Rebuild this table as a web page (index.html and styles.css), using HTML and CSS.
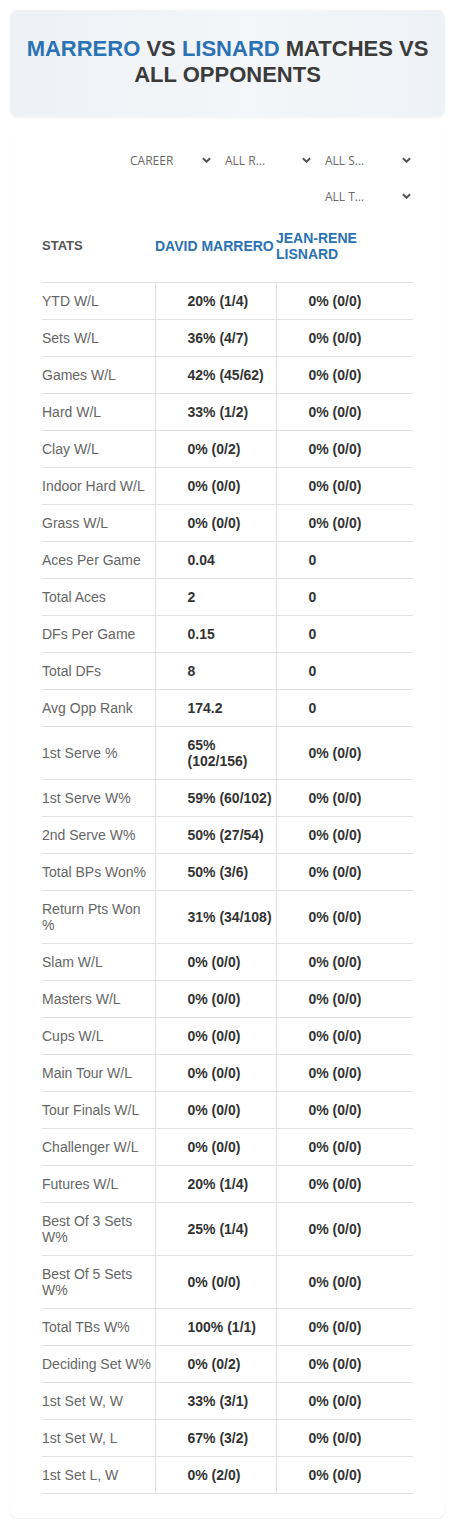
FILE: index.html
```html
<!DOCTYPE html>
<html lang="en">
<head>
    <meta charset="UTF-8">
    <meta name="viewport" content="width=device-width, initial-scale=1.0">
    <title>Marrero vs Lisnard</title>
    <link rel="stylesheet" href="styles.css">
</head>
<body>
    <div class="page-header">
        <h1><span class="blue">MARRERO</span> VS <span class="blue">LISNARD</span> MATCHES VS<br>ALL OPPONENTS</h1>
    </div>

    <div class="stats-card">
        <div class="filters">
            <div class="filter first">CAREER <svg viewBox="0 0 10 6"><polyline points="1,1 5,5 9,1"/></svg></div>
            <div class="filter">ALL R… <svg viewBox="0 0 10 6"><polyline points="1,1 5,5 9,1"/></svg></div>
            <div class="filter">ALL S… <svg viewBox="0 0 10 6"><polyline points="1,1 5,5 9,1"/></svg></div>
            <div class="filter">ALL T… <svg viewBox="0 0 10 6"><polyline points="1,1 5,5 9,1"/></svg></div>
        </div>

        <table class="stats-table">
            <thead>
                <tr>
                    <th class="label">STATS</th>
                    <th class="player">DAVID MARRERO</th>
                    <th class="player">JEAN-RENE LISNARD</th>
                </tr>
            </thead>
            <tbody>
                <tr><td>YTD W/L</td><td>20% (1/4)</td><td>0% (0/0)</td></tr>
                <tr><td>Sets W/L</td><td>36% (4/7)</td><td>0% (0/0)</td></tr>
                <tr><td>Games W/L</td><td>42% (45/62)</td><td>0% (0/0)</td></tr>
                <tr><td>Hard W/L</td><td>33% (1/2)</td><td>0% (0/0)</td></tr>
                <tr><td>Clay W/L</td><td>0% (0/2)</td><td>0% (0/0)</td></tr>
                <tr><td>Indoor Hard W/L</td><td>0% (0/0)</td><td>0% (0/0)</td></tr>
                <tr><td>Grass W/L</td><td>0% (0/0)</td><td>0% (0/0)</td></tr>
                <tr><td>Aces Per Game</td><td>0.04</td><td>0</td></tr>
                <tr><td>Total Aces</td><td>2</td><td>0</td></tr>
                <tr><td>DFs Per Game</td><td>0.15</td><td>0</td></tr>
                <tr><td>Total DFs</td><td>8</td><td>0</td></tr>
                <tr><td>Avg Opp Rank</td><td>174.2</td><td>0</td></tr>
                <tr><td>1st Serve %</td><td>65% (102/156)</td><td>0% (0/0)</td></tr>
                <tr><td>1st Serve W%</td><td>59% (60/102)</td><td>0% (0/0)</td></tr>
                <tr><td>2nd Serve W%</td><td>50% (27/54)</td><td>0% (0/0)</td></tr>
                <tr><td>Total BPs Won%</td><td>50% (3/6)</td><td>0% (0/0)</td></tr>
                <tr><td>Return Pts Won %</td><td>31% (34/108)</td><td>0% (0/0)</td></tr>
                <tr><td>Slam W/L</td><td>0% (0/0)</td><td>0% (0/0)</td></tr>
                <tr><td>Masters W/L</td><td>0% (0/0)</td><td>0% (0/0)</td></tr>
                <tr><td>Cups W/L</td><td>0% (0/0)</td><td>0% (0/0)</td></tr>
                <tr><td>Main Tour W/L</td><td>0% (0/0)</td><td>0% (0/0)</td></tr>
                <tr><td>Tour Finals W/L</td><td>0% (0/0)</td><td>0% (0/0)</td></tr>
                <tr><td>Challenger W/L</td><td>0% (0/0)</td><td>0% (0/0)</td></tr>
                <tr><td>Futures W/L</td><td>20% (1/4)</td><td>0% (0/0)</td></tr>
                <tr><td>Best Of 3 Sets W%</td><td>25% (1/4)</td><td>0% (0/0)</td></tr>
                <tr><td>Best Of 5 Sets W%</td><td>0% (0/0)</td><td>0% (0/0)</td></tr>
                <tr><td>Total TBs W%</td><td>100% (1/1)</td><td>0% (0/0)</td></tr>
                <tr><td>Deciding Set W%</td><td>0% (0/2)</td><td>0% (0/0)</td></tr>
                <tr><td>1st Set W, W</td><td>33% (3/1)</td><td>0% (0/0)</td></tr>
                <tr><td>1st Set W, L</td><td>67% (3/2)</td><td>0% (0/0)</td></tr>
                <tr><td>1st Set L, W</td><td>0% (2/0)</td><td>0% (0/0)</td></tr>
            </tbody>
        </table>
    </div>
</body>
</html>
```

FILE: styles.css
```css
body {
    margin: 0;
    padding: 10px;
    background-color: #ffffff;
    font-family: "Liberation Sans", Arial, sans-serif;
    color: #333;
}

.page-header {
    background: linear-gradient(90deg, #edf1f5 0%, #f4f6f9 55%, #eef2f6 100%);
    border-radius: 8px;
    box-shadow: 0 1px 3px rgba(0, 0, 0, 0.05);
    padding: 26px 12px 29px;
    text-align: center;
}

.page-header h1 {
    margin: 0;
    font-size: 22px;
    line-height: 26px;
    font-weight: bold;
    color: #3b3b3b;
}

.blue {
    color: #2a72b5;
}

.stats-card {
    margin-top: 10px;
    background-color: #ffffff;
    border-radius: 8px;
    box-shadow: 0 1px 2px rgba(0, 0, 0, 0.07);
    padding: 17px 30px 24px 32px;
}

/* Filtry */
.filters {
    display: flex;
    flex-wrap: wrap;
    justify-content: flex-end;
    row-gap: 4px;
    column-gap: 5px;
}

.filter {
    width: 95px;
    height: 32px;
    box-sizing: border-box;
    padding: 0 4px 0 5px;
    display: flex;
    align-items: center;
    justify-content: space-between;
    font-family: "Open Sans", sans-serif;
    font-size: 12px;
    color: #6a6a6a;
}

.filter.first {
    padding-left: 10px;
}

.filter svg {
    width: 9px;
    height: 6px;
    fill: none;
    stroke: #555;
    stroke-width: 2.2;
}

/* Tabulka */
.stats-table {
    margin-top: 12px;
    width: 371px;
    border-collapse: collapse;
    table-layout: fixed;
    font-size: 14px;
    line-height: 16px;
}

.stats-table th {
    padding: 6px 0 20px;
    text-align: left;
    vertical-align: middle;
    font-weight: bold;
}

.stats-table th.label {
    width: 113px;
    font-size: 13px;
    color: #555;
}

.stats-table th.player {
    font-size: 14px;
    color: #2a72b5;
}

.stats-table th:nth-child(2) {
    width: 121px;
}

.stats-table td {
    border-top: 1px solid #e2e2e2;
    border-bottom: 1px solid #e2e2e2;
    padding: 10px 0 10px 32px;
    vertical-align: middle;
    font-weight: bold;
    color: #333;
}

.stats-table td:first-child {
    padding-left: 0;
    font-weight: normal;
    color: #666;
    border-right: 1px solid #e2e2e2;
}

.stats-table td:nth-child(2) {
    border-right: 1px solid #e2e2e2;
}
```
